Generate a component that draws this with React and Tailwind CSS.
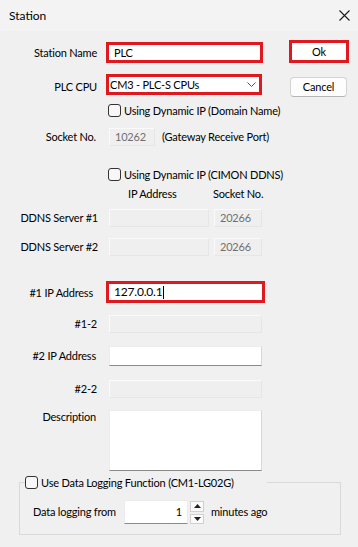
import React from "react";

const RED = "border-[#e0181f]";

function Check() {
  return <span className="w-[13px] h-[13px] border border-[#333333] rounded-[3px] bg-[#f7f7f7] shrink-0" />;
}

function Disabled({ w, h = "h-[18px]", children, cls = "" }) {
  return (
    <div className={`${w} ${h} ${cls} bg-[#efefef] border border-[#fafafa] border-r-[#e6e6e6] border-b-[#e6e6e6] flex items-center pl-[5px] text-[#6f6f6f]`}>
      {children}
    </div>
  );
}

export default function App() {
  return (
    <div className="w-[358px] h-[547px] bg-[#f0f0f0] text-black text-[11px] tracking-[-0.2px] leading-[14px] font-['Lato','Noto_Sans',sans-serif] flex flex-col overflow-hidden">
      {/* title bar */}
      <div className="h-[31px] bg-[#f3f3f3] flex items-center justify-between pl-[9px] pr-[8px] shrink-0">
        <span className="text-[12px] tracking-normal">Station</span>
        <svg width="11" height="11" viewBox="0 0 11 11">
          <path d="M0.5 0.5 L10.5 10.5 M10.5 0.5 L0.5 10.5" stroke="#1a1a1a" strokeWidth="1.1" fill="none" />
        </svg>
      </div>

      {/* Row 1 */}
      <div className="flex items-center h-[23px] mt-[9px]">
        <span className="w-[97px] text-right pt-[3px]">Station Name</span>
        <div className={`ml-[9px] w-[157px] h-[21px] mt-[2px] border-[3px] ${RED} bg-white pl-[5px] flex items-center`}>PLC</div>
        <div className={`ml-[26px] w-[60px] h-[23px] border-[3px] ${RED} bg-white flex items-center justify-center`}>Ok</div>
      </div>

      {/* Row 2 */}
      <div className="flex items-start h-[23px] mt-[11px]">
        <span className="w-[97px] text-right pt-[6px]">PLC CPU</span>
        <div className={`ml-[9px] w-[156px] h-[21px] border-[3px] ${RED} bg-white pl-[1px] pr-[3px] flex items-center justify-between`}>
          <span>CM3 - PLC-S CPUs</span>
          <svg width="9" height="6" viewBox="0 0 9 6">
            <path d="M0.5 0.5 L4.5 4.5 L8.5 0.5" stroke="#555" strokeWidth="1" fill="none" />
          </svg>
        </div>
        <div className="ml-[28px] mt-[3px] w-[57px] h-[20px] bg-[#fdfdfd] border border-[#d3d3d3] border-b-[#b5b5b5] rounded-[4px] flex items-center justify-center">Cancel</div>
      </div>

      {/* Row 3 */}
      <div className="flex items-center h-[13px] mt-[7px] pl-[108px]">
        <Check />
        <span className="ml-[3px]">Using Dynamic IP (Domain Name)</span>
      </div>

      {/* Row 4 */}
      <div className="flex items-center h-[18px] mt-[11px]">
        <span className="w-[96px] text-right">Socket No.</span>
        <Disabled w="ml-[13px] w-[46px]">10262</Disabled>
        <span className="ml-[7px]">(Gateway Receive Port)</span>
      </div>

      {/* Row 5 */}
      <div className="flex items-center h-[13px] mt-[22px] pl-[108px]">
        <Check />
        <span className="ml-[3px]">Using Dynamic IP (CIMON DDNS)</span>
      </div>

      {/* Row 6 headers */}
      <div className="flex items-center h-[14px] mt-[6px] pl-[128px]">
        <span className="w-[85px]">IP Address</span>
        <span>Socket No.</span>
      </div>

      {/* Row 7 */}
      <div className="flex items-center h-[18px] mt-[8px]">
        <span className="w-[98px] text-right">DDNS Server #1</span>
        <Disabled w="ml-[11px] w-[100px]" />
        <Disabled w="ml-[5px] w-[48px]">20266</Disabled>
      </div>

      {/* Row 8 */}
      <div className="flex items-center h-[18px] mt-[11px]">
        <span className="w-[98px] text-right">DDNS Server #2</span>
        <Disabled w="ml-[11px] w-[100px]" />
        <Disabled w="ml-[5px] w-[48px]">20266</Disabled>
      </div>

      {/* Row 9 */}
      <div className="flex items-center h-[22px] mt-[25px]">
        <span className="w-[93px] text-right pt-[2px]">#1 IP Address</span>
        <div className={`ml-[13px] w-[159px] h-[22px] border-[3px] ${RED} bg-white pl-[5px] flex items-center text-[12px]`}>
          <span>127.0.0.1</span>
          <span className="w-px h-[13px] bg-black ml-[1px]" />
        </div>
      </div>

      {/* Row 10 */}
      <div className="flex items-center h-[18px] mt-[12px]">
        <span className="w-[97px] text-right">#1-2</span>
        <Disabled w="ml-[12px] w-[153px]" />
      </div>

      {/* Row 11 */}
      <div className="flex items-center h-[20px] mt-[13px]">
        <span className="w-[96px] text-right">#2 IP Address</span>
        <div className="ml-[13px] w-[153px] h-[20px] bg-white border border-[#ececec] border-r-[#d8d8d8] border-b-[#8a8a8a]" />
      </div>

      {/* Row 12 */}
      <div className="flex items-center h-[18px] mt-[14px]">
        <span className="w-[97px] text-right">#2-2</span>
        <Disabled w="ml-[12px] w-[153px]" />
      </div>

      {/* Row 13 */}
      <div className="flex items-start h-[61px] mt-[12px]">
        <span className="w-[96px] text-right">Description</span>
        <div className="ml-[13px] w-[153px] h-[61px] bg-white border border-[#ececec] border-r-[#d8d8d8] border-b-[#8a8a8a]" />
      </div>

      {/* Group box */}
      <div className="relative mt-[11px] ml-[19px] w-[322px] h-[53px] border border-[#d9d9d9] shrink-0">
        <div className="absolute -top-[7px] left-[5px] h-[13px] flex items-center bg-[#f0f0f0] pr-[33px]">
          <Check />
          <span className="ml-[3px]">Use Data Logging Function (CM1-LG02G)</span>
        </div>
        <div className="flex items-center mt-[17px] pl-[13px] h-[24px]">
          <span className="w-[91px]">Data logging from</span>
          <div className="w-[64px] h-[24px] bg-white border border-[#ececec] border-b-[#8a8a8a] flex items-center justify-end pr-[5px]">1</div>
          <div className="ml-[2px] w-[14px] flex flex-col gap-[2px]">
            <div className="h-[11px] bg-[#fbfbfb] border border-[#d0d0d0] flex items-center justify-center">
              <svg width="7" height="4" viewBox="0 0 7 4"><path d="M0 4 L3.5 0 L7 4 Z" fill="#222" /></svg>
            </div>
            <div className="h-[10px] bg-[#fbfbfb] border border-[#d0d0d0] flex items-center justify-center">
              <svg width="7" height="4" viewBox="0 0 7 4"><path d="M0 0 L3.5 4 L7 0 Z" fill="#222" /></svg>
            </div>
          </div>
          <span className="ml-[7px]">minutes ago</span>
        </div>
      </div>
    </div>
  );
}
